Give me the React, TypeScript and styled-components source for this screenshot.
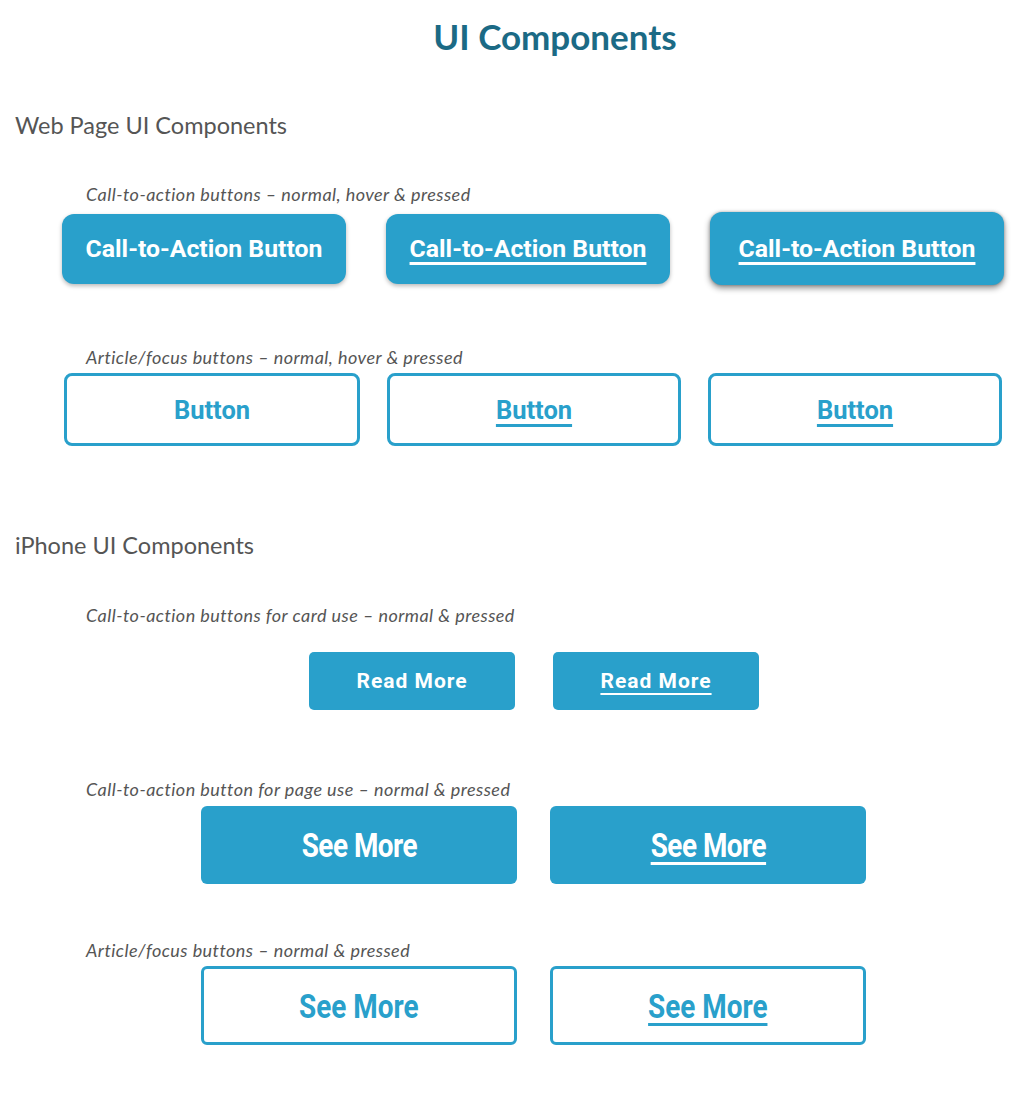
import React from "react";
import styled, { createGlobalStyle, css } from "styled-components";

const Global = createGlobalStyle`
  html, body { margin: 0; padding: 0; background: #ffffff; }
  body { font-family: "Lato", "Open Sans", sans-serif; }
`;

const BLUE = "#29a0cb";

const Page = styled.div`
  width: 1035px;
  height: 1101px;
  display: flex;
  flex-direction: column;
  background: #fff;
  overflow: hidden;
`;

const Title = styled.h1`
  margin: 14px 0 0 0;
  padding-left: 75px;
  text-align: center;
  font-family: "Lato", sans-serif;
  font-weight: 700;
  font-size: 35px;
  line-height: 44px;
  color: #1b6a85;
`;

const SectionHeading = styled.h2<{ $top: number }>`
  margin: ${(p) => p.$top}px 0 0 15px;
  font-family: "Lato", sans-serif;
  font-weight: 400;
  font-size: 23.5px;
  line-height: 30px;
  color: #555555;
`;

const Caption = styled.p<{ $top: number }>`
  margin: ${(p) => p.$top}px 0 0 86px;
  font-family: "Lato", sans-serif;
  font-style: italic;
  font-size: 18px;
  letter-spacing: 0.45px;
  line-height: 20px;
  color: #555555;
`;

const Row = styled.div<{ $top: number; $left: number; $gap: number }>`
  display: flex;
  align-items: center;
  margin-top: ${(p) => p.$top}px;
  padding-left: ${(p) => p.$left}px;
  gap: ${(p) => p.$gap}px;
`;

const Label = styled.span<{ $underline?: boolean; $thick?: number; $squeeze?: number }>`
  display: inline-block;
  white-space: nowrap;
  ${(p) =>
    p.$squeeze &&
    css`
      transform: scaleX(${p.$squeeze});
    `}
  ${(p) =>
    p.$underline &&
    css`
      text-decoration: underline;
      text-decoration-thickness: ${p.$thick ?? 3}px;
      text-underline-offset: 5px;
    `}
`;

const CtaButton = styled.div<{ $pressed?: boolean }>`
  display: flex;
  align-items: center;
  justify-content: center;
  box-sizing: border-box;
  width: ${(p) => (p.$pressed ? 294 : 284)}px;
  height: ${(p) => (p.$pressed ? 73 : 70)}px;
  border-radius: 12px;
  background: ${BLUE};
  color: #ffffff;
  font-family: "Roboto", sans-serif;
  font-weight: 700;
  font-size: 24.8px;
  box-shadow: ${(p) =>
    p.$pressed
      ? "0 3px 6px rgba(0,0,0,0.45), 0 0 3px rgba(0,0,0,0.25)"
      : "0 2px 4px rgba(0,0,0,0.28)"};
`;

const OutlineButton = styled.div<{ $w: number; $h: number; $size: number; $radius: number }>`
  display: flex;
  align-items: center;
  justify-content: center;
  box-sizing: border-box;
  width: ${(p) => p.$w}px;
  height: ${(p) => p.$h}px;
  border: 3px solid ${BLUE};
  border-radius: ${(p) => p.$radius}px;
  background: #ffffff;
  color: ${BLUE};
  font-family: "Roboto", sans-serif;
  font-weight: 700;
  font-size: ${(p) => p.$size}px;
`;

const SolidButton = styled.div<{ $w: number; $h: number; $size: number; $radius: number; $spacing: number }>`
  display: flex;
  align-items: center;
  justify-content: center;
  box-sizing: border-box;
  width: ${(p) => p.$w}px;
  height: ${(p) => p.$h}px;
  border-radius: ${(p) => p.$radius}px;
  background: ${BLUE};
  color: #ffffff;
  font-family: "Roboto", sans-serif;
  font-weight: 700;
  font-size: ${(p) => p.$size}px;
  letter-spacing: ${(p) => p.$spacing}px;
`;

export default function App() {
  return (
    <>
      <Global />
      <Page>
        <Title>UI Components</Title>

        <SectionHeading $top={52}>Web Page UI Components</SectionHeading>

        <Caption $top={44}>Call-to-action buttons – normal, hover &amp; pressed</Caption>
        <Row $top={8} $left={62} $gap={40}>
          <CtaButton>
            <Label>Call-to-Action Button</Label>
          </CtaButton>
          <CtaButton>
            <Label $underline>Call-to-Action Button</Label>
          </CtaButton>
          <CtaButton $pressed>
            <Label $underline>Call-to-Action Button</Label>
          </CtaButton>
        </Row>

        <Caption $top={62}>Article/focus buttons – normal, hover &amp; pressed</Caption>
        <Row $top={6} $left={64} $gap={27}>
          <OutlineButton $w={296} $h={73} $size={25.5} $radius={8}>
            <Label>Button</Label>
          </OutlineButton>
          <OutlineButton $w={294} $h={73} $size={25.5} $radius={8}>
            <Label $underline>Button</Label>
          </OutlineButton>
          <OutlineButton $w={294} $h={73} $size={25.5} $radius={8}>
            <Label $underline>Button</Label>
          </OutlineButton>
        </Row>

        <SectionHeading $top={84}>iPhone UI Components</SectionHeading>

        <Caption $top={45}>Call-to-action buttons for card use – normal &amp; pressed</Caption>
        <Row $top={27} $left={309} $gap={38}>
          <SolidButton $w={206} $h={58} $size={21} $radius={5} $spacing={1}>
            <Label>Read More</Label>
          </SolidButton>
          <SolidButton $w={206} $h={58} $size={21} $radius={5} $spacing={1}>
            <Label $underline $thick={2}>Read More</Label>
          </SolidButton>
        </Row>

        <Caption $top={69}>Call-to-action button for page use – normal &amp; pressed</Caption>
        <Row $top={7} $left={201} $gap={33}>
          <SolidButton $w={316} $h={78} $size={34} $radius={6} $spacing={-0.6}>
            <Label $squeeze={0.82}>See More</Label>
          </SolidButton>
          <SolidButton $w={316} $h={78} $size={34} $radius={6} $spacing={-0.6}>
            <Label $underline $squeeze={0.82}>See More</Label>
          </SolidButton>
        </Row>

        <Caption $top={56}>Article/focus buttons – normal &amp; pressed</Caption>
        <Row $top={6} $left={201} $gap={33}>
          <OutlineButton $w={316} $h={79} $size={34} $radius={6}>
            <Label $squeeze={0.82}>See More</Label>
          </OutlineButton>
          <OutlineButton $w={316} $h={79} $size={34} $radius={6}>
            <Label $underline $squeeze={0.82}>See More</Label>
          </OutlineButton>
        </Row>
      </Page>
    </>
  );
}
